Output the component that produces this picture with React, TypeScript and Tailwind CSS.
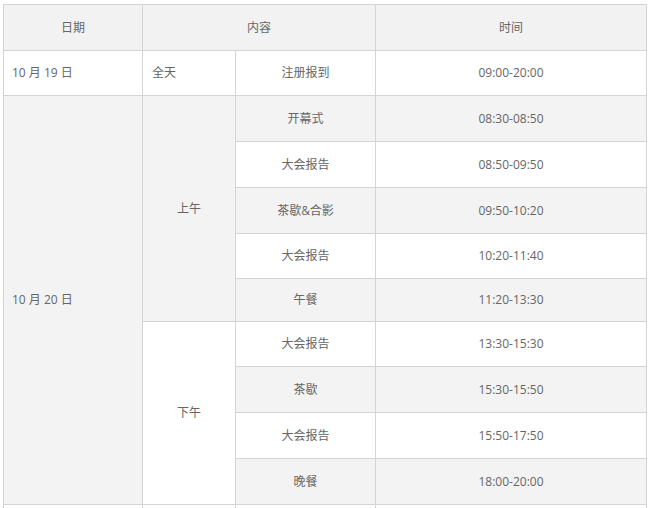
import React from 'react';

// one row of the morning / afternoon agenda
interface Slot {
  title: string;
  time: string;
  h: string;
}

const morning: Slot[] = [
  { title: '开幕式', time: '08:30-08:50', h: 'h-[46px]' },
  { title: '大会报告', time: '08:50-09:50', h: 'h-[46px]' },
  { title: '茶歇&合影', time: '09:50-10:20', h: 'h-[46px]' },
  { title: '大会报告', time: '10:20-11:40', h: 'h-[45px]' },
  { title: '午餐', time: '11:20-13:30', h: 'h-[43px]' },
];

const afternoon: Slot[] = [
  { title: '大会报告', time: '13:30-15:30', h: 'h-[45px]' },
  { title: '茶歇', time: '15:30-15:50', h: 'h-[46px]' },
  { title: '大会报告', time: '15:50-17:50', h: 'h-[46px]' },
  { title: '晚餐', time: '18:00-20:00', h: 'h-[46px]' },
];

const cell = 'border border-[#d4d4d4] p-0 align-middle';

const App: React.FC = () => {
  const rows = [...morning, ...afternoon];

  return (
    <div className="bg-white pt-[4px] pl-[3px] font-['Open_Sans','Noto_Sans_CJK_SC',sans-serif] text-[12px] text-[#666]">
      <table className="w-[643px] table-fixed border-collapse">
        <colgroup>
          <col className="w-[139px]" />
          <col className="w-[93px]" />
          <col className="w-[140px]" />
          <col className="w-[271px]" />
        </colgroup>
        <thead>
          <tr className="h-[46px] bg-[#f2f2f2]">
            <th className={`${cell} font-normal text-center`}>日期</th>
            <th className={`${cell} font-normal text-center`} colSpan={2}>
              内容
            </th>
            <th className={`${cell} font-normal text-center`}>时间</th>
          </tr>
        </thead>
        <tbody>
          <tr className="h-[45px] bg-white">
            <td className={`${cell} pl-[8px]`}>10 月 19 日</td>
            <td className={`${cell} pl-[9px]`}>全天</td>
            <td className={`${cell} text-center`}>注册报到</td>
            <td className={`${cell} text-center`}>09:00-20:00</td>
          </tr>
          {rows.map((r, i) => {
            const gray = i % 2 === 0;
            return (
              <tr key={i} className={`${r.h} ${gray ? 'bg-[#f3f3f3]' : 'bg-white'}`}>
                {i === 0 && (
                  <td className={`${cell} pl-[8px] bg-[#f3f3f3]`} rowSpan={rows.length}>
                    10 月 20 日
                  </td>
                )}
                {i === 0 && (
                  <td className={`${cell} text-center bg-[#f3f3f3]`} rowSpan={morning.length}>
                    上午
                  </td>
                )}
                {i === morning.length && (
                  <td className={`${cell} text-center bg-white`} rowSpan={afternoon.length}>
                    下午
                  </td>
                )}
                <td className={`${cell} text-center`}>{r.title}</td>
                <td className={`${cell} text-center`}>{r.time}</td>
              </tr>
            );
          })}
          {/* next day's row, only its top edge shows in the frame */}
          <tr className="h-[46px] bg-white">
            <td className={cell} />
            <td className={cell} />
            <td className={cell} />
            <td className={cell} />
          </tr>
        </tbody>
      </table>
    </div>
  );
};

export default App;
